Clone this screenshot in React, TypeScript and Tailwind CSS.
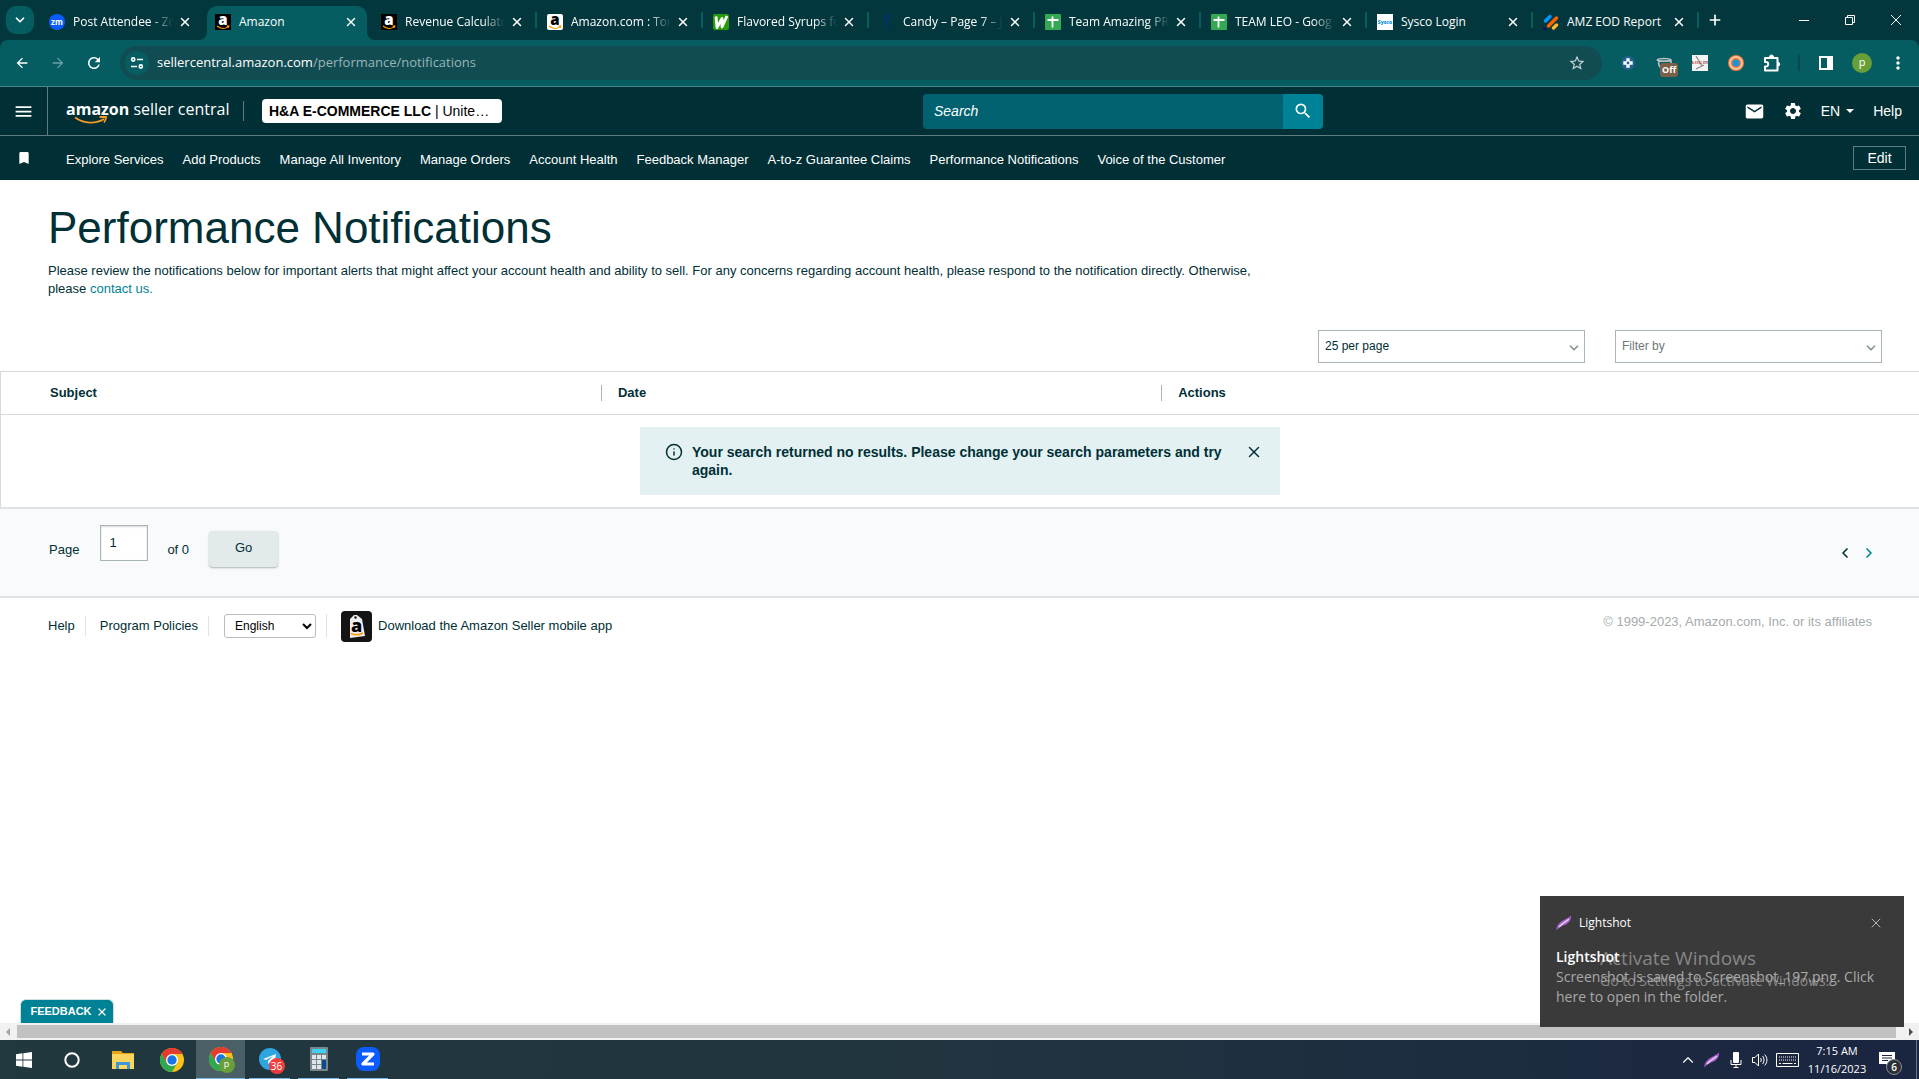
import React, { useState } from 'react';
import {
  MdArrowBack,
  MdArrowForward,
  MdBookmark,
  MdEmail,
  MdMenu,
  MdMoreVert,
  MdRefresh,
  MdSearch,
  MdSettings,
  MdStarBorder
} from 'react-icons/md';
import { ChevronDown, ChevronLeft, ChevronRight, ChevronUp, Info, Plus, X } from 'lucide-react';

interface BrowserTab {
  title: string;
  icon: React.ReactNode;
  active?: boolean;
  divider?: boolean;
}

function AmazonIcon({ light }: { light?: boolean }) {
  return (
    <svg className="w-4 h-4" viewBox="0 0 16 16">
      <rect width="16" height="16" rx={light ? 2 : 0} fill={light ? '#fff' : '#000'} />
      <text x="8" y="10.5" textAnchor="middle" fontFamily="Open Sans, sans-serif" fontWeight="800" fontSize="15" fill={light ? '#000' : '#fff'}>a</text>
      <path d="M2 12c3.500 3 8 3 11 .6M11.600 12l2.200-.2-.5 2" fill="none" stroke="#ff9900" strokeWidth="1.2" />
    </svg>
  );
}

function SheetsIcon() {
  return (
    <svg className="w-4 h-4" viewBox="0 0 16 16">
      <rect width="16" height="16" rx="1" fill="#34a853" />
      <path d="M2.5 6h11M7.5 2.5v11" stroke="#fff" strokeWidth="1.8" />
    </svg>
  );
}

const tabs: BrowserTab[] = [
  {
    title: 'Post Attendee - Zo',
    icon: (
      <svg className="w-4 h-4" viewBox="0 0 16 16">
        <circle cx="8" cy="8" r="8" fill="#0b5cff" />
        <text x="8" y="10.5" textAnchor="middle" fontFamily="Open Sans, sans-serif" fontWeight="700" fontSize="8" fill="#fff">zm</text>
      </svg>
    )
  },
  { title: 'Amazon', icon: <AmazonIcon />, active: true },
  { title: 'Revenue Calculato', icon: <AmazonIcon />, divider: true },
  { title: 'Amazon.com : Tor', icon: <AmazonIcon light />, divider: true },
  {
    title: 'Flavored Syrups fo',
    divider: true,
    icon: (
      <svg className="w-4 h-4" viewBox="0 0 16 16">
        <rect width="16" height="16" rx="2" fill="#259b0c" />
        <path d="M3 2.500l1 11L9 4.500l0 8.500L14 2" fill="none" stroke="#fff" strokeWidth="2.8" strokeLinejoin="round" />
      </svg>
    )
  },
  {
    title: 'Candy – Page 7 – J',
    divider: true,
    icon: (
      <svg className="w-4 h-4" viewBox="0 0 16 16">
        <circle cx="8" cy="3" r="2.3" fill="none" stroke="#04306f" strokeWidth="1.4" />
        <path d="M6.5 7h3l-.7 5H7.2z" fill="#04306f" />
        <circle cx="8" cy="14.5" r="1.3" fill="#04306f" />
      </svg>
    )
  },
  { title: 'Team Amazing PR', icon: <SheetsIcon />, divider: true },
  { title: 'TEAM LEO - Goog', icon: <SheetsIcon />, divider: true },
  {
    title: 'Sysco Login',
    divider: true,
    icon: (
      <svg className="w-4 h-4" viewBox="0 0 16 16">
        <rect width="16" height="16" fill="#fff" />
        <text x="8" y="10" textAnchor="middle" fontFamily="Open Sans, sans-serif" fontWeight="800" fontSize="5" fill="#0a93d6">Sysco</text>
      </svg>
    )
  },
  {
    title: 'AMZ EOD Report',
    divider: true,
    icon: (
      <svg className="w-4 h-4" viewBox="0 0 16 16">
        <path d="M2.5 7L7 2.5" stroke="#0099ff" strokeWidth="3.4" strokeLinecap="round" />
        <path d="M5.5 12L13.5 4" stroke="#ff6100" strokeWidth="3.4" strokeLinecap="round" />
        <path d="M10.5 14L13.5 11" stroke="#ffb629" strokeWidth="3.4" strokeLinecap="round" />
        <path d="M.5 12v4h4z" fill="#0a1551" />
      </svg>
    )
  }
];

const navLinks = [
  'Explore Services',
  'Add Products',
  'Manage All Inventory',
  'Manage Orders',
  'Account Health',
  'Feedback Manager',
  'A-to-z Guarantee Claims',
  'Performance Notifications',
  'Voice of the Customer'
];

function Tab({ tab }: { tab: BrowserTab }) {
  const fade = tab.title.length > 14 || tab.title.startsWith('Candy');
  return (
    <div className="relative w-[166px] pl-0.5 pr-1 pt-1.5 flex">
      <div className={tab.active ? 'flex-1 min-w-0 flex items-center pl-2 pb-0.5 rounded-t-[10px] bg-[#055d62]' : 'flex-1 min-w-0 flex items-center pl-2 pb-0.5'}>
        {tab.icon}
        <span
          className={
            fade
              ? 'ml-2 w-[100px] overflow-hidden whitespace-nowrap text-[12px] leading-5 text-white [mask-image:linear-gradient(to_right,black_78%,transparent)]'
              : 'ml-2 w-[100px] overflow-hidden whitespace-nowrap text-[12px] leading-5 text-white'
          }
        >
          {tab.title}
        </span>
        <button type="button" aria-label={`Close ${tab.title}`} className="ml-[5px] text-white">
          <X className="w-3.5 h-3.5" strokeWidth={2.5} />
        </button>
      </div>
      {tab.active && (
        <>
          <svg className="absolute -left-1.5 bottom-0 w-2 h-2" viewBox="0 0 8 8"><path d="M8 0v8H0a8 8 0 0 0 8-8" fill="#055d62" /></svg>
          <svg className="absolute -right-1 bottom-0 w-2 h-2" viewBox="0 0 8 8"><path d="M0 0v8h8a8 8 0 0 1-8-8" fill="#055d62" /></svg>
        </>
      )}
      {tab.divider && <span className="absolute right-0 top-3 w-0.5 h-4 bg-[#055d62]" />}
    </div>
  );
}

function TabStrip() {
  return (
    <div className="h-10 flex bg-[#02373d]">
      <button type="button" aria-label="Search tabs" className="mt-1.5 ml-1.5 mr-[5px] w-7 h-7 flex items-center justify-center rounded-[10px] bg-[#055d62] text-white">
        <ChevronDown className="w-3.5 h-3.5" strokeWidth={3} />
      </button>
      {tabs.map((tab) => (
        <Tab key={tab.title} tab={tab} />
      ))}
      <button type="button" aria-label="New tab" className="px-2 text-white">
        <Plus className="w-4 h-4" strokeWidth={2.5} />
      </button>
      <div className="ml-auto flex text-white">
        <button type="button" aria-label="Minimize" className="w-[46px] flex items-center justify-center">
          <svg className="w-3 h-3" viewBox="0 0 12 12"><path d="M1 6.5h10" stroke="currentColor" /></svg>
        </button>
        <button type="button" aria-label="Restore" className="w-[46px] flex items-center justify-center">
          <svg className="w-3 h-3" viewBox="0 0 12 12" fill="none" stroke="currentColor"><path d="M1.5 3.5h7v7h-7zM3.5 3.5v-2h7v7h-2" /></svg>
        </button>
        <button type="button" aria-label="Close window" className="w-[46px] flex items-center justify-center">
          <svg className="w-3 h-3" viewBox="0 0 12 12"><path d="M1 1l10 10M11 1L1 11" stroke="currentColor" /></svg>
        </button>
      </div>
    </div>
  );
}

function Toolbar() {
  return (
    <div className="bg-[#02373d]">
      <div className="h-[47px] pl-1 pr-[3px] flex items-center rounded-t-lg bg-[#055d62] border-b border-[#45868a] text-white">
        <button type="button" aria-label="Back" className="w-9 flex justify-center"><MdArrowBack className="w-4 h-4" /></button>
        <button type="button" aria-label="Forward" className="w-9 flex justify-center text-[#69a0a3]"><MdArrowForward className="w-4 h-4" /></button>
        <button type="button" aria-label="Reload" className="w-9 flex justify-center"><MdRefresh className="w-[18px] h-[18px]" /></button>
        <div className="ml-2 mr-2 flex-1 h-[34px] pl-[5px] pr-4 flex items-center rounded-full bg-[#114c52] text-[13px]">
          <span className="w-6 h-6 mr-2 flex items-center justify-center rounded-full bg-[#055d62]">
            <svg className="w-3.5 h-3.5" viewBox="0 0 14 14" fill="none" stroke="#fff" strokeWidth="1.6">
              <circle cx="3.2" cy="3.5" r="1.6" />
              <path d="M7 3.5h6M1 10.5h6" />
              <circle cx="10.8" cy="10.5" r="1.6" />
            </svg>
          </span>
          sellercentral.amazon.com<span className="text-[#9ab5b7]">/performance/notifications</span>
          <MdStarBorder className="ml-auto w-[18px] h-[18px] text-[#c5d3d4]" />
        </div>
        <div className="w-9 flex justify-center">
          <svg className="w-4 h-4" viewBox="0 0 16 16">
            <circle cx="8" cy="8" r="7" fill="#21618c" />
            <path d="M8 3.3v9.4M3.3 8h9.4" stroke="#fff" strokeWidth="3.4" />
            <circle cx="8" cy="8" r="1.4" fill="#21618c" />
          </svg>
        </div>
        <div className="relative w-9 flex justify-center">
          <svg className="w-4 h-4" viewBox="0 0 16 16" fill="none">
            <path d="M1 5c2-2 12-2 14 0v3M1 5c2 1.500 12 1.500 14 0M3 6c-1 3 0 5 2 7" stroke="#b9c3c4" strokeWidth="1.600" />
          </svg>
          <span className="absolute left-3.5 top-2 px-0.5 rounded-[3px] bg-[#7b5f46] text-[9px] leading-[14px] font-bold">Off</span>
        </div>
        <div className="w-9 flex justify-center">
          <svg className="w-4 h-4" viewBox="0 0 16 16">
            <rect width="16" height="16" fill="#f4f4f4" />
            <path d="M4 1l6 10M4 14l8-4" stroke="#888" strokeWidth="1.2" />
            <text x="8" y="8.500" textAnchor="middle" fontFamily="Liberation Serif, serif" fontWeight="700" fontSize="4.500" fill="#a3262a">LOG IN</text>
          </svg>
        </div>
        <div className="w-9 flex justify-center">
          <svg className="w-4 h-4" viewBox="0 0 16 16">
            <circle cx="8" cy="8" r="8" fill="#e8793a" />
            <circle cx="8" cy="8" r="6" fill="none" stroke="#f8c39c" strokeWidth="2" />
            <circle cx="8" cy="8" r="3.500" fill="#1a94d8" />
          </svg>
        </div>
        <button type="button" aria-label="Extensions" className="w-9 flex justify-center">
          <svg className="w-[18px] h-[18px]" viewBox="0 0 18 18" fill="none" stroke="#fff" strokeWidth="2">
            <path d="M2 4h12.500v12.500H2v-4h1a2 2 0 0 0 0-4.500H2z" strokeLinejoin="round" />
            <path d="M6.500 3a2 2 0 0 1 4 0zM15 8.500a1.500 1.500 0 0 1 0 3.500z" fill="#fff" strokeWidth="1" />
          </svg>
        </button>
        <span className="mx-2 w-0.5 h-4 bg-[#0a474c]" />
        <button type="button" aria-label="Side panel" className="w-9 flex justify-center">
          <svg className="w-4 h-4" viewBox="0 0 16 16">
            <path d="M2 2h12v12H2z" fill="none" stroke="#fff" strokeWidth="2" />
            <path d="M9 2h5v12H9z" fill="#fff" />
          </svg>
        </button>
        <button type="button" aria-label="Profile" className="w-9 flex justify-center">
          <span className="w-5 h-5 rounded-full bg-[#689f38] text-[11px] leading-[18px] text-center">p</span>
        </button>
        <button type="button" aria-label="Menu" className="w-9 flex justify-center"><MdMoreVert className="w-5 h-5" /></button>
      </div>
    </div>
  );
}

function SellerHeader() {
  return (
    <header className="bg-[#002f36] text-white">
      <div className="h-[49px] flex items-center border-b border-[#5f7d81] text-[14px]">
        <button type="button" aria-label="Open menu" className="w-12 h-full flex items-center justify-center border-r border-[#5f7d81]">
          <MdMenu className="w-[21px] h-[21px]" />
        </button>
        <a href="#" className="relative ml-[18px] w-[161px] pb-1 whitespace-nowrap font-['Open_Sans',sans-serif] text-[16px] leading-6">
          <b className="font-bold">amazon</b> seller central
          <svg className="absolute left-2 top-[18px] w-9 h-2.5" viewBox="0 0 36 10" fill="none" stroke="#f79a1f" strokeWidth="1.8">
            <path d="M1 2.500c9 6.500 21 6.500 29 1.500M25.500 2h6.500c0 2-.8 4-2 5.500" />
          </svg>
        </a>
        <span className="ml-4 w-px h-5 bg-[#5f7d81]" />
        <button type="button" className="ml-[18px] w-[240px] h-6 px-[7px] rounded-sm bg-white text-black text-left truncate">
          <b>H&amp;A E-COMMERCE LLC</b> | Unite…
        </button>
        <form className="ml-auto w-[400px] h-[35px] flex" onSubmit={(e) => e.preventDefault()}>
          <input type="text" aria-label="Search" placeholder="Search" className="flex-1 min-w-0 px-[11px] rounded-l-sm bg-[#006170] italic placeholder:text-white focus:outline-none" />
          <button type="submit" aria-label="Submit search" className="w-10 flex items-center justify-center rounded-r-sm bg-[#008296]">
            <MdSearch className="w-5 h-5" />
          </button>
        </form>
        <div className="w-[596px] pr-[17px] flex items-center justify-end">
          <button type="button" aria-label="Messages"><MdEmail className="w-[21px] h-[21px]" /></button>
          <button type="button" aria-label="Settings" className="ml-[18px]"><MdSettings className="w-5 h-5" /></button>
          <button type="button" className="ml-[18px] flex items-center">
            EN
            <svg className="ml-1.5 w-2 h-1" viewBox="0 0 8 4"><path d="M0 0h8L4 4z" fill="currentColor" /></svg>
          </button>
          <a href="#" className="ml-[19px]">Help</a>
        </div>
      </div>
      <nav className="h-11 pl-4 pr-[13px] pt-1 flex items-center text-[13px]">
        <MdBookmark className="w-4 h-4 mb-1" />
        <div className="ml-[34px] flex gap-[19px]">
          {navLinks.map((link) => (
            <a key={link} href="#" className="whitespace-nowrap">{link}</a>
          ))}
        </div>
        <button type="button" className="ml-auto mb-1 w-[53px] h-6 border border-[#5f7d81] text-[14px]">Edit</button>
      </nav>
    </header>
  );
}

function Dropdown({ label, options, className }: { label: string; options: string[]; className: string }) {
  return (
    <div className="relative w-[267px]">
      <select aria-label={label} className={`w-full h-[33px] pl-1.5 pb-0.5 appearance-none rounded-none border border-[#a7b5b7] bg-white text-[12px] ${className}`}>
        {options.map((option) => (
          <option key={option}>{option}</option>
        ))}
      </select>
      <ChevronDown className="absolute right-1 top-[11px] w-3.5 h-3.5 pointer-events-none text-[#879596]" strokeWidth={3} />
    </div>
  );
}

function Notifications() {
  const [page, setPage] = useState('1');
  const [showAlert, setShowAlert] = useState(true);

  return (
    <main>
      <div className="px-12 pt-5">
        <h1 className="text-[44px] leading-[56px]">Performance Notifications</h1>
        <p className="mt-1.5 max-w-[1230px] text-[13px] leading-[18px]">
          Please review the notifications below for important alerts that might affect your account health and ability to
          sell. For any concerns regarding account health, please respond to the notification directly. Otherwise, please{' '}
          <a href="#" className="text-[#008296]">contact us.</a>
        </p>
      </div>

      <div className="mt-8 mb-2 pr-[37px] flex justify-end gap-[30px]">
        <Dropdown label="Results per page" options={['25 per page']} className="text-[#002f36]" />
        <Dropdown label="Filter by" options={['Filter by']} className="text-[#6c7778]" />
      </div>

      <table className="w-full table-fixed border border-[#d5dbdb] border-r-0 border-b-0 text-[13px]">
        <thead>
          <tr className="h-[43px] border-b border-[#d5dbdb] text-left">
            <th className="w-[31.3%] pl-[49px]">Subject</th>
            <th className="w-[29.2%]"><div className="pl-4 h-4 leading-4 border-l border-[#a7b5b7]">Date</div></th>
            <th><div className="pl-4 h-4 leading-4 border-l border-[#a7b5b7]">Actions</div></th>
          </tr>
        </thead>
        <tbody>
          <tr>
            <td colSpan={3} className="h-[92px] py-3">
              {showAlert && (
                <div role="alert" className="mx-auto w-[640px] h-[68px] pl-[25px] pr-[17px] pt-4 flex items-start bg-[#e3f1f2] text-[14px] leading-[18px] font-bold">
                  <Info className="w-[18px] h-[18px]" strokeWidth={2} />
                  <p className="ml-[9px] flex-1">Your search returned no results. Please change your search parameters and try again.</p>
                  <button type="button" aria-label="Dismiss" className="ml-3" onClick={() => setShowAlert(false)}>
                    <X className="w-[18px] h-[18px]" strokeWidth={2} />
                  </button>
                </div>
              )}
            </td>
          </tr>
        </tbody>
      </table>

      <div className="h-[91px] pl-[49px] pr-[42px] flex items-start border-y-2 border-[#dfe3e5] bg-[#f8fafb] text-[13px]">
        <label htmlFor="page" className="mt-8 leading-[18px]">Page</label>
        <input
          id="page"
          type="text"
          value={page}
          onChange={(e) => setPage(e.target.value)}
          className="mt-4 ml-[21px] w-12 h-9 px-2 pb-0.5 border border-[#a7b5b7] bg-white shadow-[inset_0_1px_2px_rgba(0,0,0,0.15)] focus:outline-none"
        />
        <span className="mt-8 ml-[19px] leading-[18px]">of 0</span>
        <button type="button" className="mt-[22px] ml-5 pb-0.5 w-[69px] h-9 rounded-sm bg-[#e3eaeb] shadow-[0_1px_2px_rgba(0,0,0,0.3)]">Go</button>
        <div className="ml-auto mt-9 flex gap-2">
          <button type="button" aria-label="Previous page"><ChevronLeft className="w-4 h-4" strokeWidth={2.5} /></button>
          <button type="button" aria-label="Next page" className="text-[#008296]"><ChevronRight className="w-4 h-4" strokeWidth={2.5} /></button>
        </div>
      </div>
    </main>
  );
}

function Footer() {
  return (
    <footer className="pl-12 pr-[47px] pt-3 flex items-start text-[13px]">
      <div className="h-8 flex items-center">
        <a href="#">Help</a>
        <span className="ml-2.5 mr-3.5 w-px h-5 bg-[#e1e4e5]" />
        <a href="#">Program Policies</a>
        <span className="ml-2.5 mr-[15px] w-px h-5 bg-[#e1e4e5]" />
        <select aria-label="Language" className="w-[92px] h-6 pl-1.5 rounded-[3px] border border-[#bbb] bg-white text-[12px] text-black">
          <option>English</option>
        </select>
        <span className="ml-2.5 mr-3.5 w-px h-6 bg-[#e1e4e5]" />
        <a href="#" className="flex items-center">
          <svg className="w-[31px] h-[31px] mr-1.5" viewBox="0 0 31 31">
            <rect width="31" height="31" rx="4" fill="#141414" />
            <path d="M9 8l4-4h3l5 4 3 17-15 2z" fill="#eee" />
            <circle cx="14.5" cy="6.5" r="1.2" fill="#141414" />
            <text x="15.5" y="20.5" textAnchor="middle" fontFamily="Open Sans, sans-serif" fontWeight="800" fontSize="18" fill="#000">a</text>
            <path d="M10 22.500c4 2 8 1.700 12-.5" fill="none" stroke="#ff9900" strokeWidth="1.5" />
          </svg>
          Download the Amazon Seller mobile app
        </a>
      </div>
      <span className="ml-auto mt-[3px] leading-[18px] text-[#a5abad]">© 1999-2023, Amazon.com, Inc. or its affiliates</span>
    </footer>
  );
}

function Feather() {
  return (
    <svg className="w-4 h-4" viewBox="0 0 16 16">
      <path d="M.5 15.500C0 11 3 8 6 6c3-2 6-3 9-5.500.5 4-1.500 7-5 9-3.500 1.500-7 2.500-9.500 6z" fill="#a35cc9" />
      <path d="M3 12C6 8.500 9 7.500 13 4" stroke="#e6cdf3" strokeWidth="1.5" fill="none" />
    </svg>
  );
}

function Toast() {
  return (
    <div className="absolute right-[15px] bottom-[52px] w-[364px] h-[131px] px-4 pt-[17px] bg-[#3a3a3a] font-['Open_Sans',sans-serif] text-white">
      <div className="absolute left-[60px] top-[49px] text-[#868686] whitespace-nowrap">
        <p className="text-[19px] leading-[26px]">Activate Windows</p>
        <p className="text-[14px] leading-5">Go to Settings to activate Windows.</p>
      </div>
      <div className="h-5 flex items-center text-[12px]">
        <Feather />
        <span className="ml-[7px]">Lightshot</span>
        <button type="button" aria-label="Close notification" className="ml-auto mr-1 text-[#b5b5b5]"><X className="w-4 h-4" strokeWidth={1.5} /></button>
      </div>
      <div className="relative mt-[14px] text-[14px] leading-5">
        <p className="font-semibold">Lightshot</p>
        <p className="text-[#a9a9a9]">Screenshot is saved to Screenshot_197.png. Click here to open in the folder.</p>
      </div>
    </div>
  );
}

function ChromeIcon({ badge }: { badge?: string }) {
  return (
    <span className="relative">
      <svg className="w-6 h-6" viewBox="0 0 24 24">
        <circle cx="12" cy="12" r="12" fill="#fbc116" />
        <path d="M12 6h10.400A12 12 0 0 0 1.600 6l5.200 9z" fill="#e33b2e" />
        <path d="M1.600 6A12 12 0 0 0 12 24l5.200-9H6.800z" fill="#2da94f" />
        <circle cx="12" cy="12" r="6" fill="#fff" />
        <circle cx="12" cy="12" r="4.700" fill="#1a73e8" />
      </svg>
      {badge && (
        <span className="absolute -right-0.5 -bottom-0.5 w-4 h-4 rounded-full bg-[#689f38] text-[9px] leading-[14px] text-center text-white">{badge}</span>
      )}
    </span>
  );
}

function Taskbar() {
  return (
    <div className="h-[39px] flex bg-linear-to-r from-[#21383f] via-[#21343f] to-[#1a2541] font-['Open_Sans',sans-serif] text-white">
      <button type="button" aria-label="Start" className="w-12 flex items-center justify-center">
        <svg className="w-4 h-4" viewBox="0 0 16 16"><path d="M0 2.200l6.500-.9v6.300H0zM7.300 1.200L16 0v7.600H7.300zM0 8.400h6.500v6.300L0 13.800zM7.300 8.400H16V16l-8.700-1.200z" fill="#fff" /></svg>
      </button>
      <button type="button" aria-label="Cortana" className="mr-0.5 w-12 flex items-center justify-center">
        <svg className="w-4 h-4" viewBox="0 0 16 16"><circle cx="8" cy="8" r="6.700" fill="none" stroke="#fff" strokeWidth="2" /></svg>
      </button>
      <button type="button" aria-label="File Explorer" className="w-[49px] flex items-center justify-center">
        <svg className="w-[22px] h-[18px]" viewBox="0 0 22 18">
          <path d="M0 0h9l2 2h11v16H0z" fill="#e8a317" />
          <path d="M0 3h22v15H0z" fill="#fbd65f" />
          <path d="M4 18v-7h14v7h-3v-4H7v4z" fill="#3b97d8" />
        </svg>
      </button>
      <button type="button" aria-label="Chrome" className="w-[49px] flex items-center justify-center"><ChromeIcon /></button>
      <button type="button" aria-label="Chrome, p" className="w-[49px] flex items-center justify-center border-b border-b-[#76b9ed] bg-[#4b5f66]"><ChromeIcon badge="p" /></button>
      <button type="button" aria-label="Telegram" className="mx-1 w-[41px] flex items-center justify-center border-b border-[#76b9ed]">
        <span className="relative">
          <svg className="w-[22px] h-[22px]" viewBox="0 0 22 22">
            <circle cx="11" cy="11" r="11" fill="#2ca5e0" />
            <path d="M4 11l13-5-2 11-4-3-2 2v-3l5-5-7 4z" fill="#fff" />
          </svg>
          <span className="absolute -right-1 -bottom-1 w-4 h-4 rounded-full bg-[#f03e3e] text-[10px] leading-4 text-center">36</span>
        </span>
      </button>
      <button type="button" aria-label="Calculator" className="mx-1 w-[41px] flex items-center justify-center border-b border-[#76b9ed]">
        <svg className="w-[18px] h-6" viewBox="0 0 18 24">
          <rect width="18" height="24" rx="1" fill="#7b868c" />
          <path d="M2 2h14v4H2z" fill="#3fd0f5" />
          <path d="M2 8h4v4H2zM7 8h4v4H7zM12 8h4v4h-4zM2 13h4v4H2zM7 13h4v4H7zM2 18h4v4H2zM7 18h4v4H7z" fill="#dfe5e8" />
          <path d="M12 13h4v9h-4z" fill="#0d4a8c" />
        </svg>
      </button>
      <button type="button" aria-label="Zoom" className="mx-1 w-[41px] flex items-center justify-center border-b border-[#76b9ed]">
        <svg className="w-6 h-6" viewBox="0 0 24 24">
          <rect width="24" height="24" rx="8" fill="#0b5cff" />
          <path d="M6 7h11L7 17h11" fill="none" stroke="#fff" strokeWidth="3.2" strokeLinejoin="round" />
        </svg>
      </button>

      <div className="ml-auto flex items-center">
        <button type="button" aria-label="Show hidden icons" className="w-6 flex justify-center"><ChevronUp className="w-[18px] h-[18px]" strokeWidth={1.5} /></button>
        <span className="w-6 flex justify-center"><Feather /></span>
        <span className="w-6 flex justify-center">
          <svg className="w-4 h-4" viewBox="0 0 16 16">
            <rect x="5" width="6" height="11" rx="1" fill="#fff" />
            <path d="M3 8v4.500h10V8M8 12.500V15.500M5.500 15.500h5" fill="none" stroke="#fff" />
          </svg>
        </span>
        <span className="w-6 flex justify-center">
          <svg className="w-4 h-4" viewBox="0 0 16 16" fill="none" stroke="#fff">
            <path d="M.5 5.500H3l3.500-3.500v12L3 10.500H.5zM8.500 6c1 1.200 1 2.800 0 4M10.500 4c2 2.400 2 5.600 0 8M12.700 2.500c3 3.400 3 7.600 0 11" />
          </svg>
        </span>
        <svg className="mx-1 w-[23px] h-3.5" viewBox="0 0 23 14" fill="none" stroke="#fff">
          <path d="M.5.500h22v13H.5z" />
          <path d="M3 4h17M3 7h17" strokeDasharray="1 1" />
          <path d="M3 10.500h2M6.500 10.500h10M18 10.500h2" />
        </svg>
        <div className="w-[68px] text-[11px] leading-[18px] text-center">
          <p>7:15 AM</p>
          <p>11/16/2023</p>
        </div>
        <button type="button" aria-label="Notifications" className="relative ml-2 mr-[21px]">
          <svg className="w-4 h-4" viewBox="0 0 16 16">
            <path d="M0 0h16v12h-5v4l-4-4H0z" fill="#fff" />
            <path d="M3 3.500h10M3 6h10M3 8.500h6" stroke="#1a2541" />
          </svg>
          <span className="absolute left-[7px] top-[7px] w-4 h-4 rounded-full border border-[#8a8f98] bg-[#2b2f38] text-[10px] leading-[14px] font-semibold text-center">6</span>
        </button>
        <span className="mr-0.5 w-px h-full bg-[#6b7388]" />
      </div>
    </div>
  );
}

export default function App() {
  return (
    <div className="relative min-h-screen flex flex-col bg-white font-['Liberation_Sans',Arial,sans-serif] text-[#002f36]">
      <div className="font-['Open_Sans',sans-serif]">
        <TabStrip />
        <Toolbar />
      </div>
      <SellerHeader />
      <Notifications />
      <Footer />

      <div className="mt-auto pl-5">
        <button type="button" className="w-[94px] h-6 pl-1 flex items-center justify-center gap-1 rounded-t-md border border-b-0 border-[#cfe0e2] bg-[#008296] text-[11px] font-bold text-white">
          FEEDBACK <X className="w-3 h-3" strokeWidth={2.5} />
        </button>
      </div>
      <div className="h-[17px] flex items-center bg-[#f1f1f1]">
        <svg className="w-[17px] h-2" viewBox="0 0 17 8"><path d="M6 4l4-4v8z" fill="#a3a3a3" /></svg>
        <div className="flex-1 mr-1.5 h-[13px] bg-[#c1c1c1]" />
        <svg className="w-[17px] h-2" viewBox="0 0 17 8"><path d="M11 4L7 0v8z" fill="#505050" /></svg>
      </div>
      <Taskbar />
      <Toast />
    </div>
  );
}
